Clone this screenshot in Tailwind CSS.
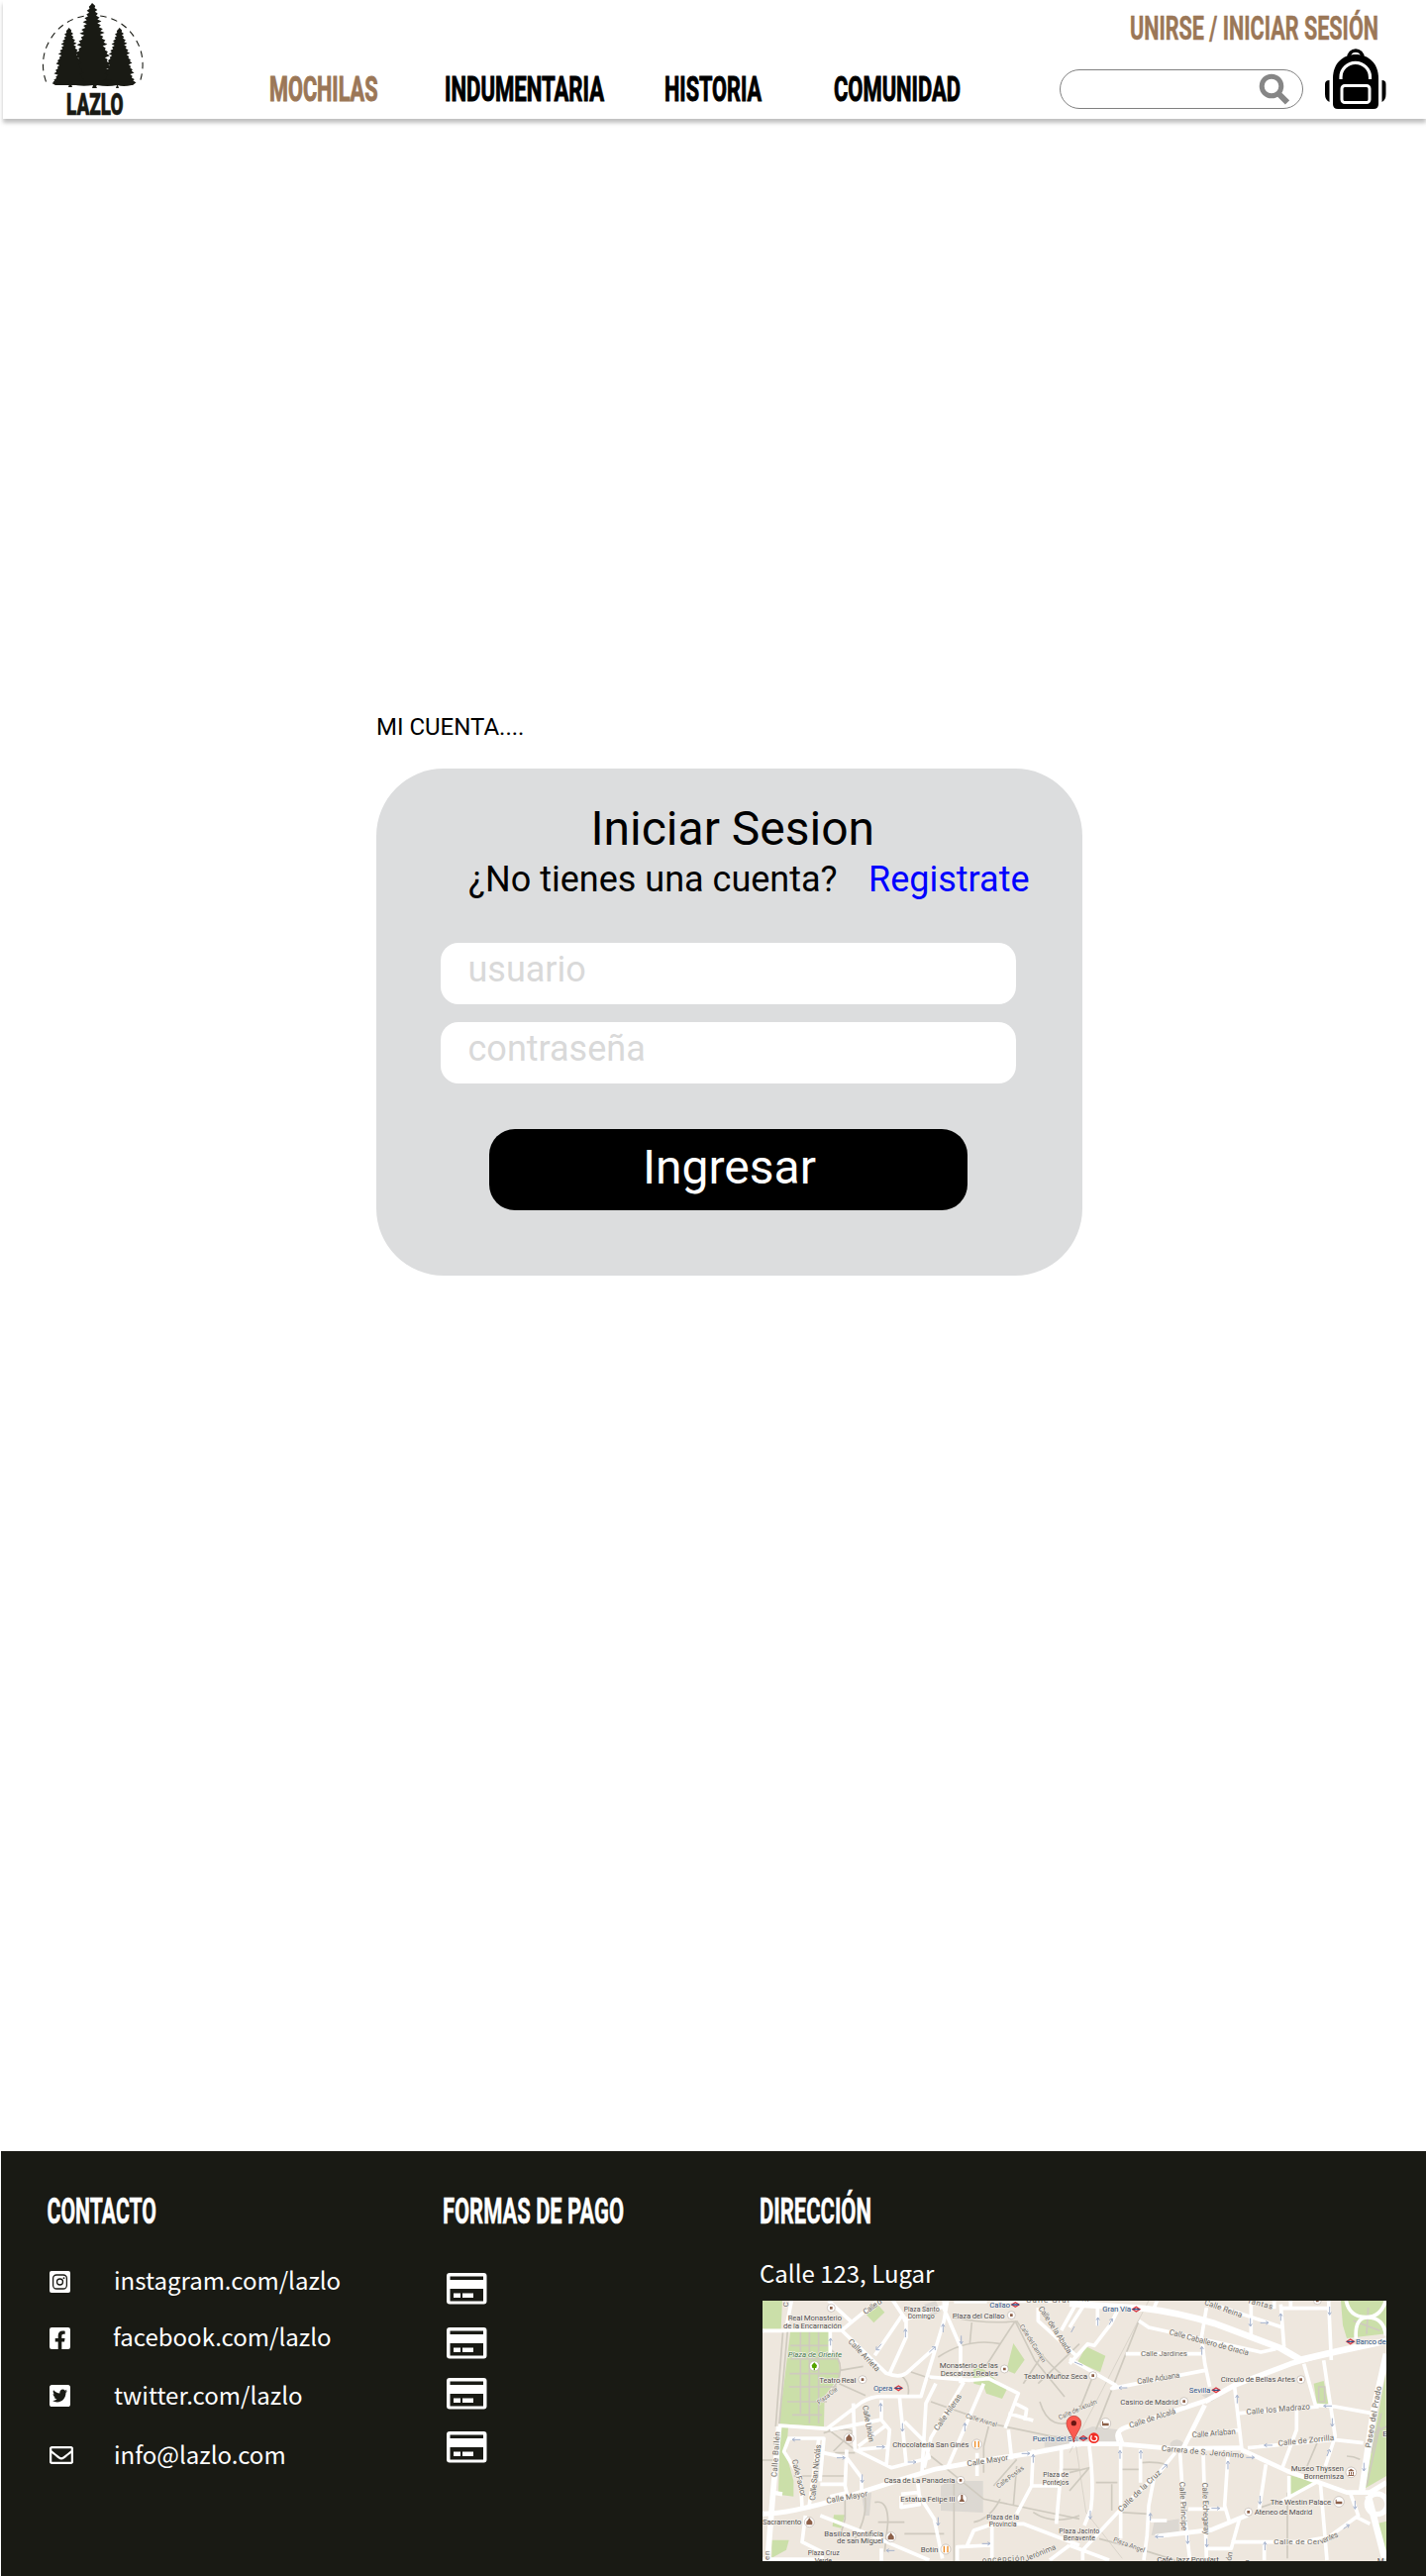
<!DOCTYPE html>
<html lang="es">
<head>
<meta charset="utf-8">
<title>Lazlo - Mi cuenta</title>
<script src="https://cdn.jsdelivr.net/npm/@tailwindcss/browser@4"></script>
</head>
<body class="bg-white w-[1440px] h-[2601px] overflow-x-hidden flex flex-col font-[Roboto,sans-serif] text-black">
<svg class="hidden">
  <symbol id="card" viewBox="0 0 41 32"><path fill="#fff" fill-rule="evenodd" d="M3 0h34.500a3 3 0 0 1 3 3v25.500a3 3 0 0 1-3 3H3a3 3 0 0 1-3-3V3a3 3 0 0 1 3-3zM3.500 3.500v3.500h33.500V3.500zM3.500 16v12.500h33.500V16zM7 20.500h7v4.500H7zM16 20.500h11v4.500H16z"/></symbol>
</svg>

<header class="ml-[3px] h-[120px] shrink-0 flex items-start bg-white shadow-[0_4px_4px_rgba(0,0,0,0.25)]">
  <svg class="w-[110px] h-[120px] ml-[37px] shrink-0" viewBox="40 0 110 120" fill="#191a14">
    <path d="M46.500 82.500C42 70 42.500 58 47.500 46 57 25 75 15.500 94 15.500s37 9.500 46 30c5 11 5.500 25 1 38" fill="none" stroke="#191a14" stroke-width="1.100" stroke-dasharray="6.500 5"/>
    <g id="trees"></g>
    <path d="M54 82q12 3 24-1 16 4 30-1 14 4 28 2l-3 4q-9 2-14 0l1 3h-3l1-3q-9 2-20 0l-1 1 1 2h-5l1-3q-12 2-22-1l1 3h-4l1-3q-8 2-16-1z"/>
    <text x="67" y="115.500" textLength="57.500" lengthAdjust="spacingAndGlyphs" class="text-[31px] font-black font-[Roboto,sans-serif]" stroke="#191a14" stroke-width=".6">LAZLO</text>
  </svg>
  <nav class="flex mt-[66px] ml-[122px] font-bold text-[35px]" stroke-width=".7">
    <svg class="w-[178px] h-[48px] overflow-visible" fill="#9b7757" stroke="#9b7757"><text x="0" y="35.500" textLength="109.500" lengthAdjust="spacingAndGlyphs">MOCHILAS</text></svg>
    <svg class="w-[222px] h-[48px] overflow-visible" stroke="#000"><text x="-1" y="35.500" textLength="161" lengthAdjust="spacingAndGlyphs">INDUMENTARIA</text></svg>
    <svg class="w-[170px] h-[48px] overflow-visible" stroke="#000"><text x="-1" y="35.500" textLength="98" lengthAdjust="spacingAndGlyphs">HISTORIA</text></svg>
    <svg class="w-[140px] h-[48px] overflow-visible" stroke="#000"><text x="0" y="35.500" textLength="128" lengthAdjust="spacingAndGlyphs">COMUNIDAD</text></svg>
  </nav>
  <div class="ml-auto mr-[36px] flex flex-col items-end">
    <svg class="w-[262px] h-[49px] mr-[2px] overflow-visible" fill="#9b7757" stroke="#9b7757" stroke-width=".5"><text x="1" y="40" textLength="251" lengthAdjust="spacingAndGlyphs" class="text-[34px] font-bold">UNIRSE / INICIAR SESIÓN</text></svg>
    <div class="flex items-end gap-[22px] mr-[4px]">
      <div class="w-[246px] h-[40px] rounded-full border border-[#808080] flex items-center justify-end pr-[13px]">
        <svg class="w-[32px] h-[32px]" fill="none" stroke="#868686"><circle cx="14" cy="13" r="9.800" stroke-width="5"/><path d="M21 20.500l9 9" stroke-width="6"/></svg>
      </div>
      <svg class="w-[62px] h-[61px]" viewBox="0 0 62 61">
        <circle cx="31" cy="9" r="7" fill="none" stroke="#000" stroke-width="3.500"/>
        <path d="M31 6c13 0 23 9 23 24v26q0 5-5 5H13q-5 0-5-5V30C8 15 18 6 31 6z"/>
        <path d="M27 6a4.500 3.500 0 0 1 8 0z" fill="#fff"/>
        <path d="M16 31v-2a14.700 14.500 0 0 1 29.500 0v2" fill="none" stroke="#fff" stroke-width="3.200"/>
        <rect x="17" y="37.500" width="28" height="17" rx="3" fill="none" stroke="#fff" stroke-width="3"/>
        <path d="M4.500 32v22Q0 52 0 46V36q0-4 4.500-4zM57.500 32v22q4-2 4-8V36q0-4-4-4z"/>
      </svg>
    </div>
  </div>
</header>

<main class="grow pt-[600px] pl-[380px]">
  <p class="text-[24px] leading-[28px]">MI CUENTA....</p>
  <section class="mt-[28px] w-[712.500px] h-[512px] rounded-[68px] bg-[#dcddde] pt-[33px] flex flex-col">
    <h1 class="text-[48px] leading-[56px] ml-[216.500px]">Iniciar Sesion</h1>
    <div class="flex text-[36px] leading-[42px] mt-[1.500px] ml-[93px]">
      <p class="w-[404px] whitespace-nowrap">¿No tienes una cuenta?</p>
      <a class="text-[#0000ff]">Registrate</a>
    </div>
    <div class="mt-[43.500px] ml-[65px] w-[581px] h-[62px] rounded-[18px] bg-white pl-[27.500px] pt-[6px] text-[36px] leading-[42px] text-[#d9d9d9]">usuario</div>
    <div class="mt-[18px] ml-[65px] w-[581px] h-[62px] rounded-[18px] bg-white pl-[27.500px] pt-[6px] text-[36px] leading-[42px] text-[#d9d9d9]">contraseña</div>
    <button class="mt-[46px] ml-[114px] w-[483px] h-[82px] rounded-[26px] bg-black text-white text-[48px] leading-[56px] pb-[4px] pl-[2px]">Ingresar</button>
  </section>
</main>

<footer class="ml-px h-[429px] shrink-0 bg-[#191a14] text-white flex items-start pt-[38px] font-['Noto_Sans_CJK_SC',sans-serif] text-[24px] leading-[36px]">
  <section class="w-[400px] pl-[46px]">
    <svg class="w-[120px] h-[44px] overflow-visible font-[Roboto,sans-serif] font-bold text-[36px]" fill="#fff" stroke="#fff" stroke-width=".5"><text x="0.500" y="35" textLength="110.500" lengthAdjust="spacingAndGlyphs">CONTACTO</text></svg>
    <ul class="flex flex-col">
      <li class="flex items-center h-[57px] mt-[21px]"><svg class="w-[21px] h-[22px] ml-[3px] mr-[44px]" viewBox="0 0 21 22"><rect width="21" height="22" rx="2" fill="#fff"/><rect x="3.600" y="4" width="13.800" height="14" rx="3.500" fill="none" stroke="#191a14" stroke-width="1.300"/><circle cx="10.500" cy="11" r="3" fill="none" stroke="#191a14" stroke-width="1.300"/><circle cx="14.500" cy="7.200" r=".9" fill="#191a14"/></svg><span class="pb-[3px]">instagram.com/lazlo</span></li>
      <li class="flex items-center h-[57px]"><svg class="w-[21px] h-[22px] ml-[3px] mr-[43px]" viewBox="0 32 448 448" preserveAspectRatio="none" fill="#fff"><path d="M400 32H48A48 48 0 0 0 0 80v352a48 48 0 0 0 48 48h137.250V327.690h-63V256h63v-54.640c0-62.150 37-96.480 93.670-96.480 27.140 0 55.520 4.840 55.520 4.840v61h-31.270c-30.810 0-40.420 19.120-40.420 38.730V256h68.780l-11 71.690h-57.780V480H400a48 48 0 0 0 48-48V80a48 48 0 0 0-48-48z"/></svg><span class="pb-[3px]">facebook.com/lazlo</span></li>
      <li class="flex items-center h-[60px]"><svg class="w-[21px] h-[22px] ml-[3px] mr-[44px]" viewBox="0 32 448 448" preserveAspectRatio="none" fill="#fff"><path d="M400 32H48C21.500 32 0 53.500 0 80v352c0 26.500 21.500 48 48 48h352c26.500 0 48-21.500 48-48V80c0-26.500-21.500-48-48-48zm-48.900 158.800c.2 2.800.2 5.700.2 8.500 0 86.700-66 186.600-186.600 186.600-37.200 0-71.700-10.800-100.700-29.400 5.300.6 10.400.8 15.800.8 30.700 0 58.900-10.400 81.400-28-28.800-.6-53-19.500-61.300-45.500 10.100 1.500 19.200 1.500 29.600-1.200-30-6.100-52.500-32.500-52.500-64.400v-.8c8.700 4.900 18.900 7.900 29.600 8.300a65.447 65.447 0 0 1-29.200-54.600c0-12.200 3.200-23.400 8.900-33.100 32.300 39.800 80.800 65.800 135.200 68.600-9.300-44.500 24-80.600 64-80.600 18.900 0 35.900 7.900 47.900 20.700 14.800-2.800 29-8.300 41.600-15.800-4.900 15.200-15.200 28-28.800 36.100 13.200-1.400 26-5.100 37.800-10.200-8.900 13.100-20.100 24.700-32.900 34z"/></svg><span class="pb-[2px]">twitter.com/lazlo</span></li>
      <li class="flex items-center h-[60px]"><svg class="w-[24px] h-[18px] ml-[3px] mr-[41px]" viewBox="0 64 512 384" fill="#fff"><path d="M464 64H48C21.490 64 0 85.490 0 112v288c0 26.510 21.490 48 48 48h416c26.510 0 48-21.490 48-48V112c0-26.510-21.490-48-48-48zm0 48v40.805c-22.422 18.259-58.168 46.651-134.587 106.490-16.841 13.247-50.201 45.072-73.413 44.701-23.208.375-56.579-31.459-73.413-44.701C106.180 199.465 70.425 171.067 48 152.805V112h416zM48 400V214.398c22.914 18.251 55.409 43.862 104.938 82.646 21.857 17.205 60.134 55.186 103.062 54.955 42.717.231 80.509-37.199 103.053-54.947 49.528-38.783 82.032-64.401 104.947-82.653V400H48z"/></svg><span class="pb-[2px]">info@lazlo.com</span></li>
    </ul>
  </section>
  <section class="w-[367px] pl-[46px]">
    <svg class="w-[200px] h-[44px] overflow-visible font-[Roboto,sans-serif] font-bold text-[36px]" fill="#fff" stroke="#fff" stroke-width=".5"><text x="0" y="35" textLength="183" lengthAdjust="spacingAndGlyphs">FORMAS DE PAGO</text></svg>
    <div class="flex flex-col pl-[4px] pt-[41px]">
      <svg class="w-[41px] h-[32px]"><use href="#card"/></svg>
      <svg class="w-[41px] h-[32px] mt-[23px]"><use href="#card"/></svg>
      <svg class="w-[41px] h-[32px] mt-[19px]"><use href="#card"/></svg>
      <svg class="w-[41px] h-[32px] mt-[22px]"><use href="#card"/></svg>
    </div>
  </section>
  <section>
    <svg class="w-[130px] h-[44px] overflow-visible font-[Roboto,sans-serif] font-bold text-[36px]" fill="#fff" stroke="#fff" stroke-width=".5"><text x="-1" y="35" textLength="113" lengthAdjust="spacingAndGlyphs">DIRECCIÓN</text></svg>
    <p class="mt-[23px] -ml-px">Calle 123, Lugar</p>
    <svg class="w-[630px] h-[263px] ml-[2px] mt-[10px] font-[Roboto,sans-serif]" viewBox="0 0 630 263">
      <rect width="630" height="263" fill="#eee7de"/>
      <!-- west half -->
      <g transform="translate(-10 -13) scale(.33333)">
        <g fill="#cbdfa9"><path d="M30 39h60l-4 86H30zM115 128h118l-2 55 30 35 4 50-47 60-2 92-136-8zM345 82l35-30 20 22-33 32zM790 168l34 50-30 42-25-10zM668 248q20-12 40 5l62 55-14 28-48-16-8-22-30-8zM84 424h24l-6 80 22 80v48l-46-6zM246 688h34l-12 40-26-6zM58 764h52l-8 30-44 24z"/></g>
        <g fill="#dcd8d2"><path d="M596 585h102v96l-128-6V600zM330 626l30-6-6 70h-14zM884 448h106v34H884zM520 50l35-10 15 32-40 20z"/></g>
        <g fill="none" stroke="#cfcabf" stroke-width="5">
          <path d="M106 130L80 420M92 130L70 420M115 175h118M115 215h140M112 260h150M110 300h145M105 345h120M120 385h90M145 130v250M172 130v280M200 130v280M265 250l70-12M262 290l80 36M233 183q70 60-10 150M562 210q90-60 190-40M664 105l-6 65M610 90q90 20 185 12L750 170l-45 70M795 100l60 120 90 110M800 100q70 110 145 170M820 290l60-90M865 290l125-120M450 265q30 25 20 65M480 255l60 20M540 345l200 70 190 40M870 345q30 100 120 50M215 440q60-20 90-5l-60 60M230 430l80 60M250 500h60M125 570h160M30 522h50M540 510l50 40 110 90 290 60M700 560v-80l15-60M610 580v250M370 650q40-10 40 60l-10 90M280 640v60l-20 70M460 745h120M380 710h80M730 600l70-80M750 640q-30 60-80 70M790 660l10-120M850 680q60 40 140 10M935 550h55M310 760q40-70 30-130"/>
        </g>
        <g fill="none" stroke="#fff" stroke-width="11" stroke-linejoin="round">
          <path d="M118 39L100 130H30M230 39l70 65-30 25H100M300 104l86-70M270 129l135 130q40 15 60 0l90-80M235 125v80M415 260l50-110V98l-40-60M455 98l120-40M370 205l85-125M580 39v25l50 115v110M590 39l-10 60-70 230H390q-30 0-60 18l-105 80-147-10M535 270l120 10 60-5 90 45-40 105M795 350l35 18-5 34M775 380l75 22M640 285l-100 170-20 90M700 290L590 545M555 290l-30 60-12 210M445 330l20 200M390 340v60l25 30-10 110M385 400l-150 30M305 350l5 140 110 55 115-30-15-50-60-60M400 420l-80 60M320 490l85-8M106 456h110l-12 130M215 500l70 15 45 60v50M205 595h70M285 490l-5 110 5 20-50 12M110 456l-15 40 50 80 5 90M200 460l-30 210M680 500v70M775 430l10 90M850 490l-5 110-45 85M935 485v60l-15 170M845 600h90M500 590l5 40 45 70 25 120M450 625l50-5M450 630v35l60-10M205 690l130 50 200 85M160 690l-10 80 60 30v25M390 790v38M620 830v-45l100-5M650 780l20-45 60-20h90l170 65M725 720v108M960 780l-60 45M985 39l-50 90M865 60v40l120 110"/>
        </g>
        <g fill="none" stroke="#fff"><path stroke-width="15" d="M30 685q80 0 250-50l140-45 130-40 140-25 160-25 150-28"/><path stroke-width="17" d="M80 420L62 620 45 830M610 39l100 0"/><path stroke-width="13" d="M60 620l30 5M30 823h175M720 39h270"/></g>
        <g fill="none" stroke="#a5b2cc" stroke-width="3"><path d="M236 175v-22m-5 8l5-8 5 8M463 150v-25m-5 8l5-8 5 8M577 135v-25m-5 8l5-8 5 8M388 375v-25m-5 8l5-8 5 8M643 435v-25m-5 8l5-8 5 8M850 530v-25m-5 8l5-8 5 8M632 145v25m-5-8l5 8 5-8M454 410v25m-5-8l5 8 5-8M332 565v25m-5-8l5 8 5-8M562 695v25m-5-8l5 8 5-8M145 460h-25m8-5l-8 5 8 5M375 482h25m-8-5l8 5-8 5M255 515h25m-8-5l8 5-8 5M470 528h25m-8-5l8 5-8 5M815 502h25m-8-5l8 5-8 5M695 775h25m-8-5l8 5-8 5M430 796h-25m8-5l-8 5 8 5M390 170l-15 18m0-10v10h10M535 195l18-16m-10 0h10v10"/></g>
        <g font-size="24" fill="#504d4d" stroke="#f4f0ea" stroke-width="4" paint-order="stroke" stroke-linejoin="round">
          <text x="107" y="99" textLength="163">Real Monasterio</text><text x="93" y="124" textLength="177">de la Encarnación</text>
          <text x="107" y="209" textLength="163" font-style="italic" fill="#447b4c">Plaza de Oriente</text>
          <text x="202" y="287" textLength="111">Teatro Real</text>
          <text x="366" y="312" textLength="58" fill="#2d5488">Opera</text><text x="718" y="59" textLength="62" fill="#2d5488">Callao</text><text x="848" y="464" textLength="138" fill="#2d5488">Puerta del Sol</text>
          <g font-size="21"><text x="458" y="71" textLength="108">Plaza Santo</text><text x="470" y="93" textLength="81">Domingo</text><text x="880" y="573" textLength="77">Plaza de</text><text x="878" y="596" textLength="80">Pontejos</text><text x="709" y="701" textLength="98">Plaza de la</text><text x="716" y="723" textLength="84">Provincia</text><text x="167" y="810" textLength="96">Plaza Cruz</text><text x="188" y="834" textLength="52">Verde</text></g>
          <text x="605" y="92" textLength="159">Plaza del Callao</text><text x="566" y="243" textLength="178">Monasterio de las</text><text x="569" y="267" textLength="175">Descalzas Reales</text>
          <text x="821" y="275" textLength="193">Teatro Muñoz Seca</text>
          <text x="424" y="483" textLength="231">Chocolatería San Ginés</text><text x="398" y="592" textLength="215">Casa de La Panadería</text><text x="448" y="648" textLength="165">Estatua Felipe III</text>
          <text x="30" y="718" textLength="118">Sacramento</text><text x="217" y="752" textLength="179">Basílica Pontificia</text><text x="255" y="775" textLength="141">de san Miguel</text><text x="509" y="800" textLength="53">Botín</text>
          <g fill="#6f6c67">
            <text transform="translate(288 164) rotate(46)" textLength="126">Calle Arrieta</text><text transform="translate(342 82) rotate(-36)" textLength="64">Calle d</text><text transform="translate(109 58) rotate(-90)">C</text>
            <text transform="translate(202 354) rotate(-38)" font-size="19" textLength="72">Plaza Ote</text><text transform="translate(333 358) rotate(80)" textLength="112">Calle Unión</text><text transform="translate(561 434) rotate(-55)" textLength="128">Calle Hileras</text>
            <text transform="translate(644 393) rotate(17)" font-size="19" textLength="98">Calle Arenal</text><text transform="translate(651 541) rotate(-9)" textLength="126">Calle Mayor</text><text transform="translate(225 653) rotate(-10)" textLength="126">Calle Mayor</text>
            <text transform="translate(745 608) rotate(-37)" font-size="20" textLength="98">Calle Postas</text><text transform="translate(73 574) rotate(-86)" textLength="138">Calle Bailén</text><text transform="translate(189 645) rotate(-84)" textLength="170">Calle San Nicolás</text>
            <text transform="translate(119 522) rotate(76)" textLength="114">Calle Factor</text><text transform="translate(865 62) rotate(57)" textLength="165">Calle de la Abada</text><text transform="translate(808 116) rotate(58)" font-size="20" textLength="132">Calle del Carmen</text>
            <text transform="translate(829 45)" textLength="190">Calle Gran Vía</text><text transform="translate(930 400) rotate(-24)" font-size="20" textLength="125">Calle de Tetuán</text><text transform="translate(696 833) rotate(-3)" textLength="128">oncepción</text><text transform="translate(828 829) rotate(-22)" textLength="100">Jerónima</text><text transform="translate(50 825) rotate(-90)" textLength="28">en</text>
          </g>
        </g>
        <g fill="#fff" stroke="#bbb2aa" stroke-width="2"><circle cx="238" cy="61" r="12"/><circle cx="333" cy="278" r="12"/><circle cx="784" cy="83" r="12"/><circle cx="763" cy="246" r="12"/><circle cx="630" cy="583" r="12"/><circle cx="187" cy="237" r="15"/><circle cx="292" cy="456" r="15"/><circle cx="679" cy="474" r="15"/><circle cx="634" cy="639" r="15"/><circle cx="172" cy="710" r="15"/><circle cx="419" cy="755" r="15"/><circle cx="585" cy="792" r="15"/></g>
        <path fill="#8c6049" d="M234 57h8v8h-8zM329 274h8v8h-8zM780 79h8v8h-8zM759 242h8v8h-8zM626 579h8v8h-8zM283 464v-10l4-4 5-7 5 7 4 4v10zM163 718v-10l4-4 5-7 5 7 4 4v10zM410 763v-10l4-4 5-7 5 7 4 4v10zM631 627h6v12l6 9h-18l6-9z"/>
        <path fill="#55a400" d="M187 226l8 9-2 8h-4v7h-4v-7h-4l-2-8z"/>
        <path stroke="#ee8d25" stroke-width="4" d="M674 464v20M685 464v20M580 782v20M591 782v20"/>
        <g fill="#fff" stroke="#d8363f" stroke-width="4"><path d="M431 304l11-7 11 7-11 7zM785 51l11-7 11 7-11 7z"/></g><path stroke="#2d5488" stroke-width="4" d="M431 304h22M785 51h22"/>
      </g>
      <!-- east half -->
      <g transform="translate(310 -13) scale(.33333)">
        <g fill="#cbdfa9"><path d="M822 39h138v100l-120 14-12-40zM50 178l59 28-16 50-68-32zM740 290l30-8 14 70-34 4zM958 260l2 310-66 38zM668 568l74 20-72 44zM930 715l30-8v110z"/></g>
        <g fill="#dcd8d2"><path d="M30 436l40-16 78 10-6 40H30zM256 712l76-12v40l-84 10zM400 325l110-30-80 50zM305 470q20-20 40 0v25h-40z"/></g>
        <g fill="none" stroke="#cfcabf" stroke-width="5"><path d="M210 100L100 380l-20 50M70 270L30 370M0 560l60-15-60 70M80 590h65M128 595v80M155 550h55M215 530q40-5 80 5M150 680l90 5M90 760l150 40 80 25M660 620v200M580 665l60-20M750 470l-30 70M840 510q20 0 40 10M920 440l40-20M915 500l30-120M900 600l40-180M860 100l80 30M905 60l-5 80M755 300v45h18v-45z"/><path stroke-width="2" d="M240 39L0 500M20 480l30 200 110 140"/></g>
        <g fill="none" stroke="#fff" stroke-width="11" stroke-linejoin="round"><path d="M45 50L0 120M85 55v60M155 50l-30 60-50 65-20-5L0 230M210 100l30 20 340 75 45-10M265 39l-10 25M415 60l-15 90 10 80 15 70M170 200h230M0 215l140 80-12 10 282-55M550 39v105M435 50l210 70M640 50l10 130M640 62h145M670 39v20M785 39l8 180M500 300l22 190M710 230l35 125 60 5 110 20M770 220l35 230-30 90M515 380l120-10 120-10M150 440l10 30M360 450l160-20M688 370v60l-45 120M540 485l260-25 90 10M335 500l10 160 20 165M405 500l10 320M480 510l-10 150 15 50M60 480q15 120 5 190l-20 50M155 480v280M215 490v100M255 580l-15 80-5 90-10 75M245 705h50M360 670h110M0 780l120 45M595 535l-20 135M665 570v70M760 590l20 235M850 620l25 70-90 65-60 10M910 715l-40-20M490 770h240M515 700l-25 90h-75M590 770v55M320 500l-40 50-120 115-120 130v30M640 648l110-60M620 39v25"/><path stroke-width="11" d="M838 39q10 50 60 50 45 0 60-50M868 155q-5-65 35-65 50 0 55 55"/><circle cx="932" cy="655" r="31" stroke-width="16"/></g>
        <g fill="none" stroke="#fff" stroke-linejoin="round"><path stroke-width="14" d="M0 473h150l160 14 215-2M340 495l70-140M150 465q-15-30 20-42l240-80M520 490l140 65 180 65h80M260 753l170-20 110-45"/><path stroke-width="20" d="M0 48l230 15q90 10 210 45l200 75 60 35 110-25 150-32M960 200l-40 180-35 240M905 630l50 190"/><path stroke-width="16" d="M410 345l90-50 170-65 70-20M910 620l50-30"/></g>
        <g fill="none" stroke="#a5b2cc" stroke-width="3"><path d="M86 115v-25m-5 8l5-8 5 8M153 518v-25m-5 8l5-8 5 8M216 518v-25m-5 8l5-8 5 8M401 203v-25m-5 8l5-8 5 8M508 350v-25m-5 8l5-8 5 8M480 550v-25m-5 8l5-8 5 8M245 705v-22m-5 8l5-8 5 8M640 100v-22m-5 8l5-8 5 8M592 795v-25m-5 8l5-8 5 8M548 92v25m-5-8l5 8 5-8M788 57v25m-5-8l5 8 5-8M796 395v25m-5-8l5 8 5-8M577 630v25m-5-8l5 8 5-8M63 675v25m-5-8l5 8 5-8M358 750v25m-5-8l5 8 5-8M416 760v25m-5-8l5 8 5-8M892 530v25m-5-8l5 8 5-8M865 645v25m-5-8l5 8 5-8M175 303h-25m8-5l-8 5 8 5M615 477h-25m8-5l-8 5 8 5M795 358h-25m8-5l-8 5 8 5M285 754h-25m8-5l-8 5 8 5M430 668h25m-8-5l8 5-8 5M535 514h25m-8-5l8 5-8 5M578 106h25m-8-5l8 5-8 5M120 112l10-18m-9 3l9-3v9M5 135l10-18M280 550l15-14m-9 0h9v9M830 730l17-12m-9-1l9 1-3 9M780 510l8-20m-8 5l8-5 3 8M40 235l-25-10"/></g>
        <g font-size="24" fill="#504d4d" stroke="#f4f0ea" stroke-width="4" paint-order="stroke" stroke-linejoin="round">
          <g fill="#2d5488"><text x="100" y="73" textLength="86">Gran Vía</text><text x="362" y="317" textLength="65">Sevilla</text><text x="867" y="172" textLength="92">Banco de</text></g>
          <text x="458" y="285" textLength="226">Círculo de Bellas Artes</text><text x="154" y="353" textLength="175">Casino de Madrid</text>
          <text x="671" y="556" textLength="160">Museo Thyssen</text><text x="710" y="580" textLength="121">Bornemisza</text><text x="608" y="656" textLength="185">The Westin Palace</text><text x="560" y="687" textLength="176">Ateneo de Madrid</text>
          <g font-size="21"><text x="-32" y="743" textLength="123">Plaza Jacinto</text><text x="-19" y="766" textLength="97">Benavente</text></g><text x="265" y="832" textLength="188">Café Jazz Populart</text><text x="932" y="835">M</text><text x="530" y="840">C</text><text x="949" y="451">E</text>
          <g fill="#6f6c67">
            <text transform="translate(407 50) rotate(20)" textLength="120">Calle Reina</text><text transform="translate(540 46) rotate(15)" textLength="76">fantas</text><text transform="translate(301 141) rotate(15)" textLength="248">Calle Caballero de Gracia</text><text x="216" y="208" textLength="141">Calle Jardines</text>
            <text transform="translate(206 292) rotate(-9)" textLength="130">Calle Aduana</text><text transform="translate(184 425) rotate(-18)" textLength="146">Calle de Alcalá</text><text transform="translate(372 454) rotate(-5)" textLength="132">Calle Arlaban</text><text transform="translate(536 384) rotate(-5)" textLength="194">Calle los Madrazo</text>
            <text transform="translate(633 479) rotate(-6)" textLength="170">Calle de Zorrilla</text><text transform="translate(278 494) rotate(5)" textLength="250">Carrera de S. Jerónimo</text><text transform="translate(156 680) rotate(-44)" textLength="170">Calle de la Cruz</text>
            <text transform="translate(333 588) rotate(87)" textLength="148">Calle Príncipe</text><text transform="translate(402 590) rotate(88)" textLength="158">Calle Echegaray</text><text transform="translate(131 768) rotate(20)" font-size="20" textLength="100">Plaza Angel</text>
            <text x="619" y="776" textLength="140">Calle de Cer</text><text transform="translate(762 776) rotate(-23)" textLength="58">vantes</text><text transform="translate(912 486) rotate(-80)" textLength="190">Paseo del Prado</text><text transform="translate(490 828) rotate(-80)">ón</text>
          </g>
        </g>
        <g fill="#fff" stroke="#bbb2aa" stroke-width="2"><circle cx="71" cy="266" r="12"/><circle cx="701" cy="278" r="12"/><circle cx="347" cy="344" r="12"/><circle cx="542" cy="679" r="12"/><circle cx="751" cy="38" r="12"/><circle cx="109" cy="411" r="16"/><circle cx="816" cy="648" r="16"/><circle cx="853" cy="559" r="16"/></g>
        <path fill="#8c6049" d="M67 262h8v8h-8zM697 274h8v8h-8zM343 340h8v8h-8zM538 675h8v8h-8zM747 38h8v5h-8zM99 404h3v6h17v8H99zM806 641h3v6h17v8h-20zM844 554l9-6 9 6v2h-18zM846 558h3v8h-3zM852 558h3v8h-3zM858 558h3v8h-3zM844 567h18v3h-18z"/>
        <g fill="#fff" stroke="#d8363f" stroke-width="4"><path d="M191 65l11-7 11 7-11 7zM433 310l11-7 11 7-11 7zM840 163l11-7 11 7-11 7zM31 456l11-7 11 7-11 7z"/></g><path stroke="#2d5488" stroke-width="4" d="M191 65h22M433 310h22M840 163h22M31 456h22"/>
        <circle cx="74" cy="455" r="16" fill="#f12e25"/><path d="M67 447q-6 14 5 17 12 1 11-10-2-4-7-3" fill="none" stroke="#fff" stroke-width="4"/>
        <path d="M13 468c-3-24-22-38-22-58a22 22 0 0 1 44 0c0 20-19 34-22 58z" fill="#fb5a50" stroke="#b93a32" stroke-width="2"/><circle cx="13" cy="410" r="8" fill="#691612"/>
      </g>
    </svg>
  </section>
</footer>
<script>
  // Each fir is a ragged outline: branch tips widen towards the ground.
  function fir(cx, top, bottom, half, rows) {
    const left = [], right = [], step = (bottom - top) / rows;
    for (let i = 0; i < rows; i++) {
      const t = (i + 1) / rows, w = half * Math.pow(t, 0.62) * (i % 3 === 1 ? 1 : i % 3 === 2 ? 0.84 : 0.93);
      const y = top + step * (i + 0.8), inner = w * (0.4 + 0.42 * Math.min(1, t * 1.6));
      right.push(`${cx + inner},${y - step * 0.5} ${cx + w},${y}`);
      left.unshift(`${cx - w},${y + 0.7} ${cx - inner},${y - step * 0.3}`);
    }
    return `<polygon points="${cx},${top} ${right.join(' ')} ${cx + half * .8},${bottom + 2} ${cx - half * .8},${bottom + 2} ${left.join(' ')}"/>`;
  }
  document.getElementById('trees').innerHTML = fir(93, 3, 84, 23, 21) + fir(69.5, 28, 84, 17, 17) + fir(120.5, 28, 84, 17, 17);
</script>
</body>
</html>
